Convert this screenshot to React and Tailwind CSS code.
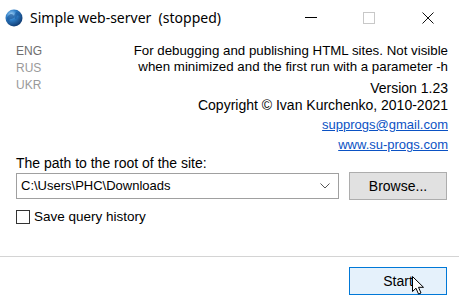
import React, { useState } from 'react';

const Globe = () => (
  <svg width="18" height="18" viewBox="0 0 18 18">
    <defs>
      <radialGradient id="g" cx="35%" cy="30%" r="70%">
        <stop offset="0%" stopColor="#9fd0f5" />
        <stop offset="45%" stopColor="#2f7fc8" />
        <stop offset="100%" stopColor="#123f77" />
      </radialGradient>
    </defs>
    <circle cx="9" cy="9" r="8.5" fill="url(#g)" />
    <path d="M4 6c2-2 4-1 5 1s-1 3-3 3-2 2-1 4c-2-1-3-3-3-5 0-1 1-2 2-3z" fill="#1d5a9c" opacity="0.7" />
    <path d="M11 3c2 0 4 2 4 4-1 0-2-1-3 0s0 3-1 3-2-2-2-3 1-2 2-4z" fill="#1d5a9c" opacity="0.6" />
  </svg>
);

const TitleBar = () => (
  <div className="flex items-center h-[35px]">
    <div className="pl-[5px] pr-[7px] flex items-center">
      <Globe />
    </div>
    <span className="text-[14px] text-black whitespace-pre" style={{ fontFamily: '"Noto Sans", sans-serif' }}>
      Simple web-server  (stopped)
    </span>
    <div className="ml-auto flex h-full pr-[6px]">
      <div className="w-[48px] flex items-center justify-center">
        <div className="w-[12px] h-px bg-black" />
      </div>
      <div className="w-[68px] flex items-center justify-center">
        <div className="w-[12px] h-[12px] border border-[#c8c8c8]" />
      </div>
      <div className="w-[50px] flex items-center justify-center">
        <svg width="12" height="12" viewBox="0 0 12 12">
          <path d="M0.5 0.5L11.5 11.5M11.5 0.5L0.5 11.5" stroke="#111" strokeWidth="1" />
        </svg>
      </div>
    </div>
  </div>
);

export default function App() {
  const [saveHistory, setSaveHistory] = useState(false);

  return (
    <div className="w-[459px] h-[306px] bg-white overflow-hidden text-black" style={{ fontFamily: '"Liberation Sans", Arial, sans-serif' }}>
      <TitleBar />

      <div className="px-[16px] text-[13px] leading-[16px]">
        <div className="flex justify-between pt-[8px]">
          <div className="flex flex-col leading-[17px] text-[12px]">
            <span className="text-[#6e6e6e]">ENG</span>
            <span className="text-[#9a9a9a]">RUS</span>
            <span className="text-[#9a9a9a]">UKR</span>
          </div>
          <div className="flex flex-col items-end text-right pr-[11px] mr-[-16px]">
            <span className="text-[13.3px]">For debugging and publishing HTML sites. Not visible</span>
            <span className="text-[13.3px]">when minimized and the first run with a parameter -h</span>
            <span className="mt-[5px] leading-[17px] text-[14px]">Version 1.23</span>
            <span className="leading-[17px] text-[14px]">Copyright © Ivan Kurchenko, 2010-2021</span>
            <span className="mt-[1px] leading-[20px] text-[#0b52c4] underline">supprogs@gmail.com</span>
            <span className="leading-[20px] text-[#0b52c4] underline">www.su-progs.com</span>
          </div>
        </div>

        <div className="text-[14px] leading-[17px]">The path to the root of the site:</div>

        <div className="flex items-center">
          <div className="w-[323px] shrink-0 h-[26px] border border-[#a0a0a0] flex items-center pl-[4px] pr-[8px]">
            <span className="flex-1">C:\Users\PHC\Downloads</span>
            <svg width="10" height="6" viewBox="0 0 10 6">
              <path d="M0.5 0.5L5 5L9.5 0.5" fill="none" stroke="#555" strokeWidth="1" />
            </svg>
          </div>
          <button className="ml-[10px] shrink-0 w-[98px] h-[28px] bg-[#e1e1e1] border border-[#adadad] text-[14px]">
            Browse...
          </button>
        </div>

        <label className="flex items-center mt-[9px] gap-[4px]">
          <span
            onClick={() => setSaveHistory(!saveHistory)}
            className="w-[14px] h-[14px] border border-[#333] bg-white inline-block"
          />
          <span className="text-[13.5px]">Save query history</span>
        </label>
      </div>

      <div className="mt-[31px] h-px bg-[#d4d4d4]" />

      <div className="flex justify-end pr-[12px] pt-[10px]">
        <button className="relative w-[98px] h-[28px] bg-[#e5f1fb] border border-[#0078d7] text-[14px]">
          Start
          <svg className="absolute left-[62px] top-[8px]" width="13" height="20" viewBox="0 0 13 20">
            <path d="M0.5 0.5V15.5L4 12.2L6.5 18L9 17L6.5 11.3H11.5Z" fill="#fff" stroke="#000" strokeWidth="1" strokeLinejoin="round" />
          </svg>
        </button>
      </div>
    </div>
  );
}
